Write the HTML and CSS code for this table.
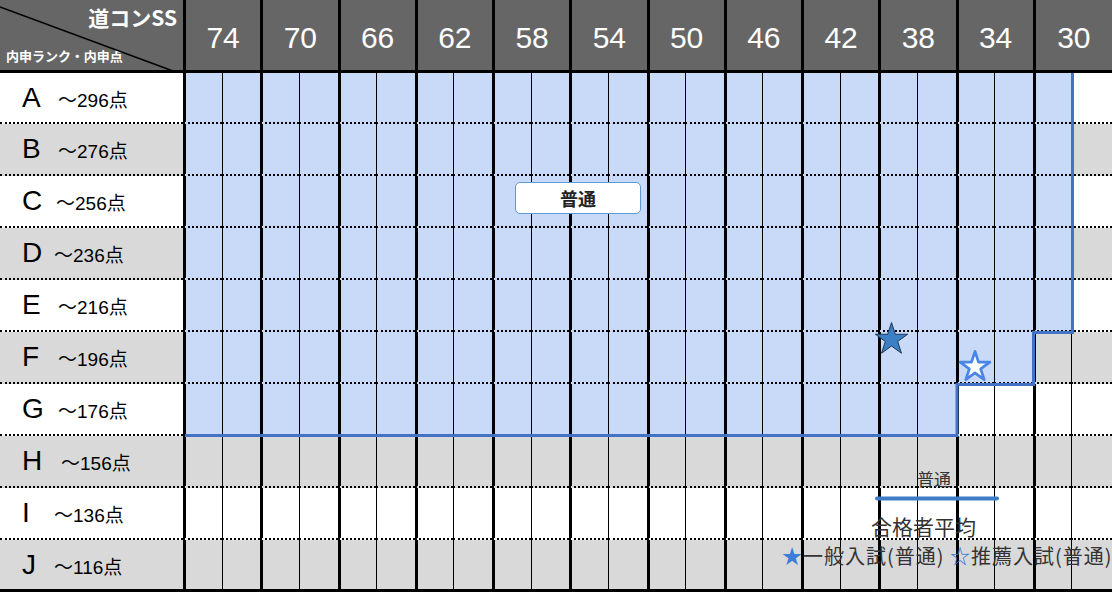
FILE: index.html
```
<!DOCTYPE html>
<html lang="ja">
  <head>
    <meta charset="UTF-8" />
    <meta name="viewport" content="width=device-width, initial-scale=1.0" />
    <title>道コンSS 合格者平均</title>
    <link rel="stylesheet" href="styles.css">
  </head>
  <body>
    <div class="chart">
      <div class="row row_head">
        <div class="corner">
          <div class="corner_top">道コンSS</div>
          <div class="corner_bottom">内申ランク・内申点</div>
        </div>
        <div class="score">74</div>
        <div class="score">70</div>
        <div class="score">66</div>
        <div class="score">62</div>
        <div class="score">58</div>
        <div class="score">54</div>
        <div class="score">50</div>
        <div class="score">46</div>
        <div class="score">42</div>
        <div class="score">38</div>
        <div class="score">34</div>
        <div class="score">30</div>
      </div>

      <div class="row row_first">
        <div class="label"><span><b class="letter">A</b>～296点</span></div>
        <i class="on"></i><i class="on"></i><i class="on"></i><i class="on"></i><i class="on"></i><i class="on"></i><i class="on"></i><i class="on"></i><i class="on"></i><i class="on"></i><i class="on"></i><i class="on"></i><i class="on"></i><i class="on"></i><i class="on"></i><i class="on"></i><i class="on"></i><i class="on"></i><i class="on"></i><i class="on"></i><i class="on"></i><i class="on"></i><i class="on"></i><i></i>
      </div>
      <div class="row row_gray">
        <div class="label"><span><b class="letter">B</b>～276点</span></div>
        <i class="on"></i><i class="on"></i><i class="on"></i><i class="on"></i><i class="on"></i><i class="on"></i><i class="on"></i><i class="on"></i><i class="on"></i><i class="on"></i><i class="on"></i><i class="on"></i><i class="on"></i><i class="on"></i><i class="on"></i><i class="on"></i><i class="on"></i><i class="on"></i><i class="on"></i><i class="on"></i><i class="on"></i><i class="on"></i><i class="on"></i><i></i>
      </div>
      <div class="row">
        <div class="label"><span><b class="letter letter_mid">C</b>～256点</span></div>
        <i class="on"></i><i class="on"></i><i class="on"></i><i class="on"></i><i class="on"></i><i class="on"></i><i class="on"></i><i class="on"></i><i class="on"></i><i class="on"></i><i class="on"></i><i class="on"></i><i class="on"></i><i class="on"></i><i class="on"></i><i class="on"></i><i class="on"></i><i class="on"></i><i class="on"></i><i class="on"></i><i class="on"></i><i class="on"></i><i class="on"></i><i></i>
      </div>
      <div class="row row_gray">
        <div class="label"><span><b class="letter letter_tight">D</b>～236点</span></div>
        <i class="on"></i><i class="on"></i><i class="on"></i><i class="on"></i><i class="on"></i><i class="on"></i><i class="on"></i><i class="on"></i><i class="on"></i><i class="on"></i><i class="on"></i><i class="on"></i><i class="on"></i><i class="on"></i><i class="on"></i><i class="on"></i><i class="on"></i><i class="on"></i><i class="on"></i><i class="on"></i><i class="on"></i><i class="on"></i><i class="on"></i><i></i>
      </div>
      <div class="row">
        <div class="label"><span><b class="letter">E</b>～216点</span></div>
        <i class="on"></i><i class="on"></i><i class="on"></i><i class="on"></i><i class="on"></i><i class="on"></i><i class="on"></i><i class="on"></i><i class="on"></i><i class="on"></i><i class="on"></i><i class="on"></i><i class="on"></i><i class="on"></i><i class="on"></i><i class="on"></i><i class="on"></i><i class="on"></i><i class="on"></i><i class="on"></i><i class="on"></i><i class="on"></i><i class="on"></i><i></i>
      </div>
      <div class="row row_gray">
        <div class="label"><span><b class="letter">F</b>～196点</span></div>
        <i class="on"></i><i class="on"></i><i class="on"></i><i class="on"></i><i class="on"></i><i class="on"></i><i class="on"></i><i class="on"></i><i class="on"></i><i class="on"></i><i class="on"></i><i class="on"></i><i class="on"></i><i class="on"></i><i class="on"></i><i class="on"></i><i class="on"></i><i class="on"></i><i class="on"></i><i class="on"></i><i class="on"></i><i class="on"></i><i></i><i></i>
      </div>
      <div class="row">
        <div class="label"><span><b class="letter">G</b>～176点</span></div>
        <i class="on"></i><i class="on"></i><i class="on"></i><i class="on"></i><i class="on"></i><i class="on"></i><i class="on"></i><i class="on"></i><i class="on"></i><i class="on"></i><i class="on"></i><i class="on"></i><i class="on"></i><i class="on"></i><i class="on"></i><i class="on"></i><i class="on"></i><i class="on"></i><i class="on"></i><i class="on"></i><i></i><i></i><i></i><i></i>
      </div>
      <div class="row row_gray">
        <div class="label"><span><b class="letter letter_wide">H</b>～156点</span></div>
        <i></i><i></i><i></i><i></i><i></i><i></i><i></i><i></i><i></i><i></i><i></i><i></i><i></i><i></i><i></i><i></i><i></i><i></i><i></i><i></i><i></i><i></i><i></i><i></i>
      </div>
      <div class="row">
        <div class="label"><span><b class="letter letter_tight">I</b>～136点</span></div>
        <i></i><i></i><i></i><i></i><i></i><i></i><i></i><i></i><i></i><i></i><i></i><i></i><i></i><i></i><i></i><i></i><i></i><i></i><i></i><i></i><i></i><i></i><i></i><i></i>
      </div>
      <div class="row row_gray row_last">
        <div class="label"><span><b class="letter letter_tight">J</b>～116点</span></div>
        <i></i><i></i><i></i><i></i><i></i><i></i><i></i><i></i><i></i><i></i><i></i><i></i><i></i><i></i><i></i><i></i><i></i><i></i><i></i><i></i><i></i><i></i><i></i><i></i>
      </div>

      <!-- overlay: diagonal, area outline, stars, legend line -->
      <svg class="overlay" width="1112" height="593" viewBox="0 0 1112 593">
        <line x1="0" y1="7" x2="173" y2="71" stroke="#000" stroke-width="1.6" />
        <path d="M185 435.5 H957 V384.5 H1033.5 V332.5 H1072.5 V73" fill="none" stroke="#4472c4" stroke-width="3" />
        <polygon transform="translate(891.5 339.5)" points="0,-17 3.82,-5.25 16.17,-5.25 6.18,2.01 9.99,13.75 0,6.49 -9.99,13.75 -6.18,2.01 -16.17,-5.25 -3.82,-5.25" fill="#3b7fc4" stroke="#1f3650" stroke-width="1" />
        <polygon transform="translate(975 367) scale(0.92)" points="0,-17 3.82,-5.25 16.17,-5.25 6.18,2.01 9.99,13.75 0,6.49 -9.99,13.75 -6.18,2.01 -16.17,-5.25 -3.82,-5.25" fill="#fff" stroke="#4a86e8" stroke-width="3" stroke-linejoin="round" />
        <line x1="877" y1="498.5" x2="997" y2="498.5" stroke="#3d7cc7" stroke-width="4" stroke-linecap="round" />
      </svg>

      <div class="course-tag">普通</div>
      <div class="legend-course">普通</div>
      <div class="legend-title">合格者平均</div>
      <div class="legend-keys"><span class="key">★</span>一般入試(普通) <span class="key">☆</span>推薦入試(普通)</div>
    </div>
  </body>
</html>
```

FILE: styles.css
```
* {
  box-sizing: border-box;
}

body {
  margin: 0;
  background: #fff;
  color: #000;
  font-family: "Liberation Sans", "Noto Sans CJK JP", sans-serif;
  overflow: hidden;
}

.chart {
  position: relative;
  width: 1112px;
  height: 593px;
  overflow: hidden;
}

.row {
  display: grid;
  grid-template-columns: 183px repeat(23, 38.64px) 1fr;
  height: 52px;
}

.row_first {
  height: 51px;
}

.row_gray {
  background-color: #d9d9d9;
}

.row > i {
  border-left: 1px solid #000;
  border-bottom: 2px dotted #000;
}

.row > i:nth-child(even) {
  border-left-width: 3px;
}

.row > i.on {
  background-color: #c9daf8;
}

/* header */
.row_head {
  height: 73px;
  background-color: #666;
  color: #fff;
}

.corner {
  display: flex;
  flex-direction: column;
  justify-content: space-between;
  padding: 7px 6px 8px 6px;
  border-bottom: 3px solid #000;
  font-family: "Noto Sans CJK JP", sans-serif;
  font-weight: 700;
  line-height: 1;
}

.corner_top {
  text-align: right;
  font-size: 21px;
}

.corner_bottom {
  font-size: 13px;
}

.score {
  grid-column: span 2;
  display: flex;
  align-items: center;
  justify-content: center;
  padding-top: 5px;
  border-left: 3px solid #000;
  border-bottom: 3px solid #000;
  font-size: 30px;
}

/* row labels */
.label {
  display: flex;
  align-items: center;
  padding-left: 22px;
  border-bottom: 2px dotted #000;
  font-size: 19px;
}

.letter {
  display: inline-block;
  width: 36px;
  font-size: 28px;
  font-weight: 400;
}

.letter_mid {
  width: 34px;
}

.letter_tight {
  width: 32px;
}

.letter_wide {
  width: 39px;
}

.row_last > i,
.row_last > .label {
  border-bottom: 3px solid #000;
}

/* overlays */
.overlay {
  position: absolute;
  top: 0;
  left: 0;
  pointer-events: none;
}

.course-tag {
  position: absolute;
  top: 182px;
  left: 515px;
  width: 126px;
  height: 32px;
  display: flex;
  align-items: center;
  justify-content: center;
  background-color: #fff;
  border: 1px solid #5b9bd5;
  border-radius: 5px;
  color: #222;
  font-family: "Noto Sans CJK JP", sans-serif;
  font-size: 18px;
  font-weight: 700;
}

.legend-course,
.legend-title,
.legend-keys {
  position: absolute;
  color: #333;
  font-family: "Noto Sans CJK JP", sans-serif;
  line-height: 1;
  white-space: nowrap;
}

.legend-course {
  top: 470px;
  left: 917px;
  font-size: 17px;
}

.legend-title {
  top: 516px;
  left: 871px;
  font-size: 21px;
}

.legend-keys {
  top: 546px;
  left: 782px;
  font-size: 20px;
  letter-spacing: 1px;
}

.key {
  color: #3b7dd8;
}
```
